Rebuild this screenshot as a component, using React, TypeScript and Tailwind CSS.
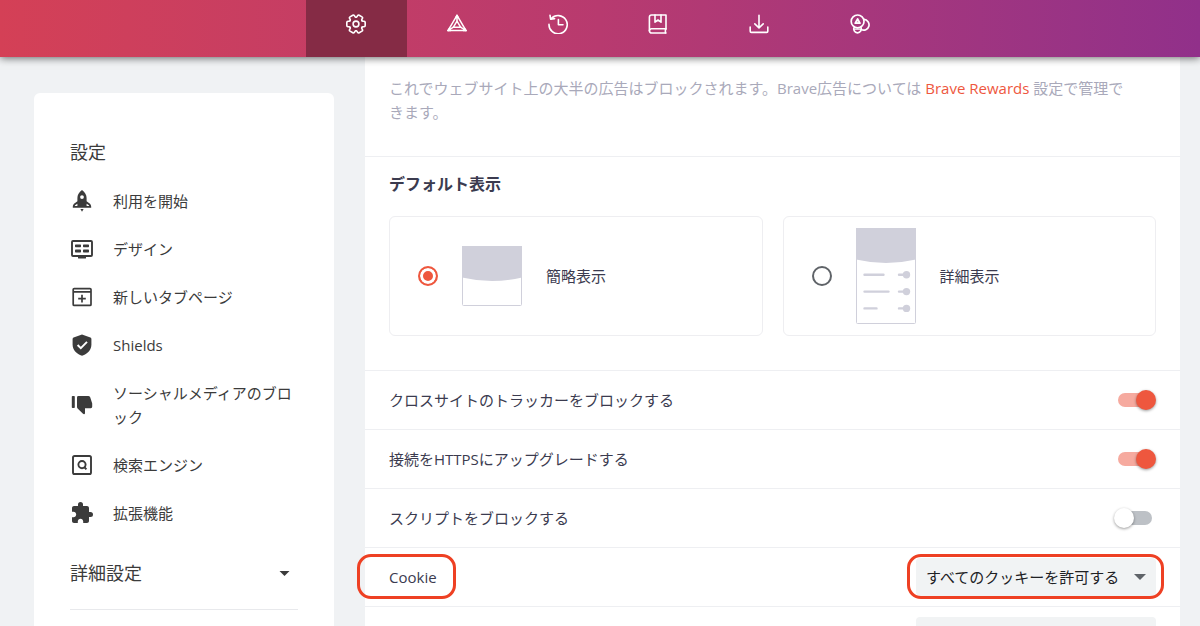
import React, { useState } from 'react';
import { MdExtension } from 'react-icons/md';

type IconProps = { className?: string };

const strokeProps = {
  fill: 'none',
  stroke: 'currentColor',
  strokeWidth: 1.6,
  strokeLinecap: 'round' as const,
  strokeLinejoin: 'round' as const,
};

// ---- Header icons ----

const GearIcon = ({ className }: IconProps) => (
  <svg viewBox="0 0 20 20" className={className} {...strokeProps}>
    <g transform="translate(10 10)">
      {[0, 60, 120, 180, 240, 300].map(angle => (
        <path
          key={angle}
          transform={`rotate(${angle})`}
          d="M5.9 -3.4Q6.2 -2.8 6.9 -2.8H8Q9.2 -2.7 9.2 -1.6V1.6Q9.2 2.7 8 2.8H6.9Q6.2 2.8 5.9 3.4"
        />
      ))}
      <circle r="2.9" />
    </g>
  </svg>
);

const RewardsIcon = ({ className }: IconProps) => (
  <svg viewBox="0 0 20 20" className={className} {...strokeProps} strokeWidth={1.5}>
    <path d="M10 1.4L19 16.6H1Z" />
    <path d="M10 7.2L13.6 13.2H6.4Z" />
    <path d="M10 1.4V7M1 16.6L6.4 13.2M19 16.6L13.6 13.2" />
    <path fill="currentColor" d="M10 1.4L11.2 3.6H8.8ZM1 16.6L2.4 14.4L3.6 16.6ZM19 16.6L17.6 14.4L16.4 16.6Z" />
  </svg>
);

const HistoryIcon = ({ className }: IconProps) => (
  <svg viewBox="0 0 20 20" className={className} {...strokeProps}>
    <path d="M3.3 4.6A9.1 9.1 0 1 1 1 10.2" />
    <path d="M2 1.2L2.6 5.2L6.6 4.6" />
    <path d="M10.4 5.6V10.8H15" />
  </svg>
);

const BookmarksIcon = ({ className }: IconProps) => (
  <svg viewBox="0 0 20 20" className={className} {...strokeProps}>
    <path d="M18 15.2V1H3.6A2.2 2.2 0 0 0 1.4 3.2V16.8A2.2 2.2 0 0 0 3.6 19H18" />
    <path d="M18 14.8H3.4A2 2 0 0 0 1.4 16.8M17.4 14.8V19" />
    <path d="M7 1V8.2L10 6L13 8.2V1" />
  </svg>
);

const DownloadIcon = ({ className }: IconProps) => (
  <svg viewBox="0 0 20 20" className={className} {...strokeProps}>
    <path d="M10 1.2V13.6M5.8 9.8L10 13.8L14.2 9.8" />
    <path d="M1.2 13V17.2Q1.2 18.4 2.4 18.4H17.6Q18.8 18.4 18.8 17.2V13" />
  </svg>
);

const WalletIcon = ({ className }: IconProps) => (
  <svg viewBox="0 0 20 20" className={className} {...strokeProps} strokeWidth={1.7}>
    <circle cx="7.6" cy="7.4" r="6.4" />
    <path fill="currentColor" fillOpacity={0.5} d="M7.6 4.8L10 9.2H5.2Z" />
    <path d="M14 5.4A5.4 5.4 0 1 1 11.2 15.6" />
    <path d="M4.2 13.2A3.8 3.8 0 1 0 11 13.4" />
    <path d="M4.6 15.2H10.4" strokeWidth={1.3} />
  </svg>
);

// ---- Sidebar icons ----

const RocketIcon = ({ className }: IconProps) => (
  <svg viewBox="0 0 24 24" className={className} fill="currentColor">
    <path
      fillRule="evenodd"
      d="M12 1C9 3 7.4 6 7.4 9V12.2L4 14.8C3.2 15.6 2.8 16.6 2.8 18V18.8H21.2V18C21.2 16.6 20.8 15.6 20 14.8L16.6 12.2V9C16.6 6 15 3 12 1ZM12 6.2A1.9 1.9 0 1 1 12 10A1.9 1.9 0 1 1 12 6.2ZM7.4 14.8V17H4.8C4.9 16.2 5.4 16 7.4 14.8ZM16.6 14.8V17H19.2C19.1 16.2 18.6 16 16.6 14.8Z"
    />
    <path d="M10.4 20H13.6L12 22.8Z" />
  </svg>
);

const AppearanceIcon = ({ className }: IconProps) => (
  <svg viewBox="0 0 24 24" className={className} fill="currentColor">
    <rect x="2" y="4" width="20" height="15" rx="1" fill="none" stroke="currentColor" strokeWidth="1.9" />
    <path d="M8 19H16V20.4Q16 21.6 15.4 21.600H8.600Q8 21.600 8 20.4Z" />
    <rect x="5" y="7.4" width="6" height="2.9" rx="0.7" />
    <rect x="13" y="7.4" width="6" height="2.9" rx="0.7" />
    <rect x="5" y="12.6" width="6" height="2.9" rx="0.7" />
    <rect x="13" y="12.6" width="6" height="2.9" rx="0.7" />
  </svg>
);

const NewTabIcon = ({ className }: IconProps) => (
  <svg viewBox="0 0 24 24" className={className} fill="none" stroke="currentColor" strokeWidth="1.7">
    <rect x="3.2" y="3.6" width="17.8" height="16.8" rx="1" />
    <path d="M3 6.8H21M12 9.8V17.4M8.2 13.6H15.8" />
  </svg>
);

const ShieldIcon = ({ className }: IconProps) => (
  <svg viewBox="0 0 24 24" className={className}>
    <path
      fill="currentColor"
      d="M12 1.4L20.4 4.6Q21.4 5 21.4 6V11.4C21.4 16.6 17.6 21 12 22.8C6.4 21 2.6 16.6 2.6 11.4V6Q2.6 5 3.6 4.6Z"
    />
    <path fill="none" stroke="#fff" strokeWidth="1.9" d="M7.6 12L10.8 15.2L17 8.8" />
  </svg>
);

const ThumbDownIcon = ({ className }: IconProps) => (
  <svg viewBox="0 0 24 24" className={className} fill="currentColor">
    <rect x="1.8" y="3" width="3" height="12" rx="0.8" />
    <path d="M7 4.4Q7 3 8.4 3H18.2Q19.6 3 20.2 4.2L22.2 10.4V13.8Q22.2 15.2 20.8 15.2H15V20Q15 21.2 14 21.2Q13 21 12 19.8L7.6 15.4Q7 14.8 7 14Z" />
  </svg>
);

const SearchEngineIcon = ({ className }: IconProps) => (
  <svg viewBox="0 0 24 24" className={className} fill="none" stroke="currentColor" strokeWidth="1.9">
    <rect x="3" y="3" width="18" height="18" rx="1.6" />
    <circle cx="12" cy="11.6" r="3.6" />
    <path d="M14.2 14L16.4 16.4" />
  </svg>
);

const Caret = ({ className }: IconProps) => (
  <svg viewBox="0 0 12 6" className={className} fill="currentColor">
    <path d="M0 0H12L6 6Z" />
  </svg>
);

// ---- Default view thumbnails ----

const SimpleViewArt = () => (
  <svg viewBox="0 0 60 60" className="h-[60px] w-[60px] shrink-0">
    <rect x="0.5" y="0.5" width="59" height="59" rx="1" fill="#fff" stroke="#d0d0db" />
    <path d="M0 0H60V31.5Q30 38.5 0 31.5Z" fill="#d0d0db" />
  </svg>
);

const AdvancedViewArt = () => (
  <svg viewBox="0 0 60 96" className="h-24 w-[60px] shrink-0">
    <rect x="0.5" y="0.5" width="59" height="95" rx="1" fill="#fff" stroke="#d0d0db" />
    <path d="M0 0H60V31.5Q30 38.5 0 31.5Z" fill="#d0d0db" />
    <g stroke="#d0d0db" strokeWidth="2.4" strokeLinecap="round">
      <path d="M8.5 46.8H27.5M8.5 63.6H32.5M8.5 80.4H20.5" />
      <path d="M43 46.8H50M43 63.6H50M43 80.4H50" />
    </g>
    <g fill="#d0d0db">
      <circle cx="50.5" cy="46.8" r="3.7" />
      <circle cx="50.5" cy="63.6" r="3.7" />
      <circle cx="50.5" cy="80.4" r="3.7" />
    </g>
  </svg>
);

const tabs = [
  { label: '設定', Icon: GearIcon },
  { label: 'Rewards', Icon: RewardsIcon },
  { label: '履歴', Icon: HistoryIcon },
  { label: 'ブックマーク', Icon: BookmarksIcon },
  { label: 'ダウンロード', Icon: DownloadIcon },
  { label: 'ウォレット', Icon: WalletIcon },
];

const menu = [
  { label: '利用を開始', Icon: RocketIcon },
  { label: 'デザイン', Icon: AppearanceIcon },
  { label: '新しいタブページ', Icon: NewTabIcon },
  { label: 'Shields', Icon: ShieldIcon },
  { label: 'ソーシャルメディアのブロック', Icon: ThumbDownIcon },
  { label: '検索エンジン', Icon: SearchEngineIcon },
  { label: '拡張機能', Icon: MdExtension },
];

const Header = () => (
  <header className="relative z-10 flex h-[57px] shrink-0 justify-center bg-linear-to-r from-[#d44056] via-[#b83a6f] to-[#91308a] pl-4 shadow-[0_1px_8px_rgba(0,0,0,0.6)]">
    <nav className="flex w-[604px]">
      {tabs.map(({ label, Icon }, i) => (
        <button
          key={label}
          type="button"
          aria-label={label}
          className={`flex flex-1 justify-center pt-3.5 text-white ${i === 0 ? 'bg-[#852b45]' : ''}`}
        >
          <Icon className="h-5 w-5" />
        </button>
      ))}
    </nav>
  </header>
);

const Sidebar = () => (
  <aside className="mt-9 w-[300px] shrink-0 rounded-md bg-white px-9 pt-[47px] text-[#3b3b3b]">
    <h1 className="text-lg leading-6">設定</h1>
    <ul className="mt-[13px]">
      {menu.map(({ label, Icon }) => (
        <li key={label}>
          <a href="#" className="flex items-center gap-[19px] py-3 leading-6">
            <Icon className="h-6 w-6 shrink-0" />
            <span className="flex-1">{label}</span>
          </a>
        </li>
      ))}
    </ul>
    <button
      type="button"
      className="flex h-[73px] w-full items-center justify-between border-b border-[#e8e9ec] pr-2 text-lg"
    >
      詳細設定
      <Caret className="h-[5px] w-[11px]" />
    </button>
    <div className="h-20" />
  </aside>
);

type ViewOptionProps = {
  label: string;
  checked: boolean;
  onChange: () => void;
  children: React.ReactNode;
};

const ViewOption: React.FC<ViewOptionProps> = ({ label, checked, onChange, children }) => (
  <label className="flex h-[120px] flex-1 items-center rounded-md border border-[#eeeef1] pl-7">
    <input
      type="radio"
      name="view"
      checked={checked}
      onChange={onChange}
      className="h-5 w-5 shrink-0 appearance-none rounded-full border-2 border-[#5f6368] checked:border-[#ee573e] checked:bg-[#ee573e] checked:shadow-[inset_0_0_0_3px_#fff]"
    />
    <span className="mr-6 ml-6">{children}</span>
    {label}
  </label>
);

type ToggleRowProps = {
  label: string;
  defaultChecked?: boolean;
};

const ToggleRow: React.FC<ToggleRowProps> = ({ label, defaultChecked }) => (
  <label className="flex h-[59px] items-center justify-between border-t border-[#eeeff2] px-6">
    {label}
    <input
      type="checkbox"
      role="switch"
      defaultChecked={defaultChecked}
      className="relative mr-1 h-3.5 w-[34px] appearance-none rounded-full bg-[#bdc1c6] before:absolute before:-top-[3px] before:-left-1 before:h-5 before:w-5 before:rounded-full before:bg-white before:shadow-[0_1px_3px_rgba(0,0,0,0.4)] checked:bg-[#f6aa9f] checked:before:left-[18px] checked:before:bg-[#ee573e]"
    />
  </label>
);

const selectClass = 'h-[38px] w-60 appearance-none rounded bg-[#f1f3f4] pr-7 pl-2.5 text-[#202124]';

const CookieRow = () => (
  <div className="relative flex h-[59px] items-center justify-between border-t border-[#eeeff2] px-6">
    <label htmlFor="cookie">Cookie</label>
    <div className="relative">
      <select id="cookie" className={selectClass}>
        <option>すべてのクッキーを許可する</option>
      </select>
      <Caret className="pointer-events-none absolute top-4 right-2.5 h-1.5 w-3 text-[#5f6368]" />
    </div>
    <div className="pointer-events-none absolute top-1.5 -left-2 h-[45px] w-[99px] rounded-[14px] border-3 border-[#ee4023]" />
    <div className="pointer-events-none absolute top-1.5 right-4 h-[45px] w-[257px] rounded-[14px] border-3 border-[#ee4023]" />
  </div>
);

export default function App() {
  const [view, setView] = useState<'simple' | 'advanced'>('simple');

  return (
    <div
      lang="ja"
      className="flex h-screen flex-col overflow-hidden bg-[#f0f2f4] font-['Open_Sans','Noto_Sans_CJK_JP',sans-serif] text-[15px]"
    >
      <Header />
      <div className="flex flex-1 items-start gap-[31px] pr-5 pl-[34px]">
        <Sidebar />
        <main className="min-w-0 flex-1 bg-white text-[#3b3b4f]">
          <p className="px-6 pt-[19px] pb-8 leading-6 text-[#a9a9ba]">
            これでウェブサイト上の大半の広告はブロックされます。Brave広告については{' '}
            <a href="#" className="font-medium text-[#ee573e]">Brave Rewards</a> 設定で管理で
            <br />
            きます。
          </p>
          <section className="border-t border-[#eeeff2] px-6 pt-[15px] pb-[34px]">
            <h2 className="text-base leading-6 font-bold">デフォルト表示</h2>
            <div className="mt-5 flex gap-5">
              <ViewOption label="簡略表示" checked={view === 'simple'} onChange={() => setView('simple')}>
                <SimpleViewArt />
              </ViewOption>
              <ViewOption label="詳細表示" checked={view === 'advanced'} onChange={() => setView('advanced')}>
                <AdvancedViewArt />
              </ViewOption>
            </div>
          </section>
          <ToggleRow label="クロスサイトのトラッカーをブロックする" defaultChecked />
          <ToggleRow label="接続をHTTPSにアップグレードする" defaultChecked />
          <ToggleRow label="スクリプトをブロックする" />
          <CookieRow />
          <div className="flex h-[59px] items-center justify-end border-t border-[#eeeff2] px-6">
            <select aria-label="フィンガープリント" className={selectClass} />
          </div>
        </main>
      </div>
    </div>
  );
}
